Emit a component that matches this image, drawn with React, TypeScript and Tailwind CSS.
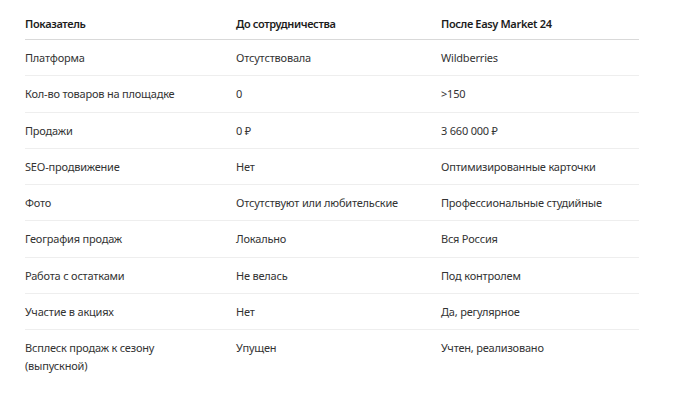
import React from "react";

const rows: [string, string, string][] = [
  ["Платформа", "Отсутствовала", "Wildberries"],
  ["Кол-во товаров на площадке", "0", ">150"],
  ["Продажи", "0 ₽", "3 660 000 ₽"],
  ["SEO-продвижение", "Нет", "Оптимизированные карточки"],
  ["Фото", "Отсутствуют или любительские", "Профессиональные студийные"],
  ["География продаж", "Локально", "Вся Россия"],
  ["Работа с остатками", "Не велась", "Под контролем"],
  ["Участие в акциях", "Нет", "Да, регулярное"],
  ["Всплеск продаж к сезону (выпускной)", "Упущен", "Учтен, реализовано"],
];

export default function App() {
  return (
    <div
      className="w-[673px] h-[399px] bg-white pl-[25px] pt-[15px]"
      style={{ fontFamily: '"Noto Sans", "Open Sans", sans-serif' }}
    >
      <div className="w-[614px]">
        <div className="grid grid-cols-[211px_205px_198px] border-b border-[#d9d9d9] text-[11px] leading-[18px] font-semibold tracking-[-0.35px] text-[#1c1c1c]">
          <div className="pb-[6px]">Показатель</div>
          <div className="pb-[6px]">До сотрудничества</div>
          <div className="pb-[6px]">После Easy Market 24</div>
        </div>
        {rows.map((r, i) => (
          <div
            key={i}
            className={
              "grid grid-cols-[211px_205px_198px] text-[11px] leading-[18px] tracking-[-0.2px] text-[#333333] " +
              (i < rows.length - 1 ? "border-b border-[#eeeeee]" : "")
            }
          >
            <div className="pt-[9px] pb-[8.25px] pr-[40px]">{r[0]}</div>
            <div className="pt-[9px] pb-[8.25px]">{r[1]}</div>
            <div className="pt-[9px] pb-[8.25px]">{r[2]}</div>
          </div>
        ))}
      </div>
    </div>
  );
}
